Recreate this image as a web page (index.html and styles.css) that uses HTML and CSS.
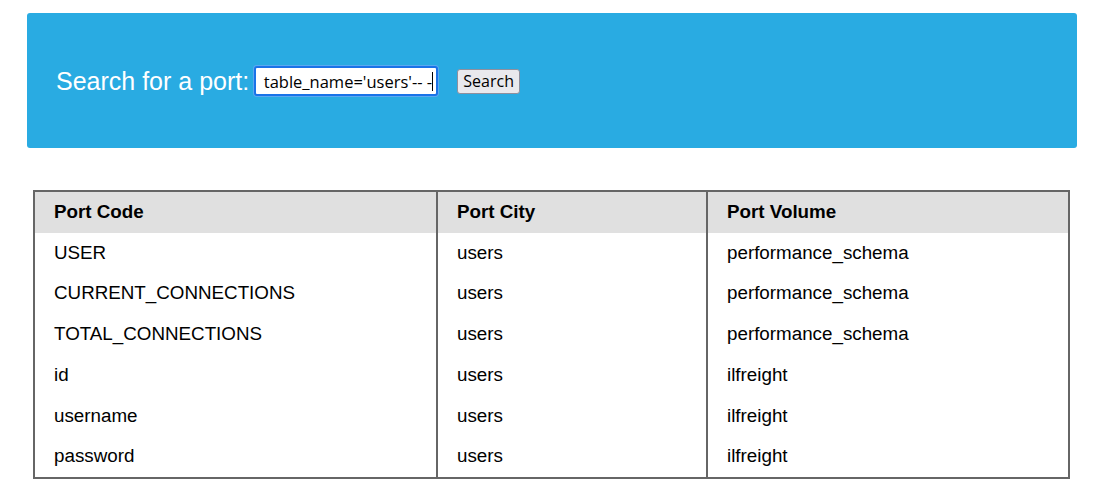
FILE: index.html
```html
<!DOCTYPE html>
<html>
<head>
<meta charset="utf-8">
<link rel="stylesheet" href="styles.css">
</head>
<body>
<div class="page">
  <div class="banner">
    <form class="search">
      <label class="label">Search for a port:</label>
      <div class="field"><span class="field-text">table_name='users'-- -</span><span class="caret"></span></div>
      <button type="button" class="btn">Search</button>
    </form>
  </div>
  <table class="ports">
    <thead>
      <tr><th class="c1">Port Code</th><th class="c2">Port City</th><th class="c3">Port Volume</th></tr>
    </thead>
    <tbody>
      <tr><td>USER</td><td>users</td><td>performance_schema</td></tr>
      <tr><td>CURRENT_CONNECTIONS</td><td>users</td><td>performance_schema</td></tr>
      <tr><td>TOTAL_CONNECTIONS</td><td>users</td><td>performance_schema</td></tr>
      <tr><td>id</td><td>users</td><td>ilfreight</td></tr>
      <tr><td>username</td><td>users</td><td>ilfreight</td></tr>
      <tr><td>password</td><td>users</td><td>ilfreight</td></tr>
    </tbody>
  </table>
</div>
</body>
</html>
```
FILE: styles.css
```css
html, body {
  margin: 0;
  padding: 0;
  background: #ffffff;
}
body {
  font-family: "Liberation Sans", Arial, sans-serif;
}
.page {
  padding: 13px 23px 0 27px;
}
.banner {
  background: #29abe2;
  border-radius: 3px;
  height: 135px;
  box-sizing: border-box;
  padding: 0 29px;
  display: flex;
  align-items: center;
}
.search {
  display: flex;
  align-items: center;
  margin: 0;
  margin-top: 1px;
}
.label {
  color: #ffffff;
  font-size: 25px;
  margin-right: 5px;
}
.field {
  width: 184px;
  height: 30px;
  box-sizing: border-box;
  border: 2px solid #1a73e8;
  box-shadow: 0 0 0 1px #5aa9f0;
  border-radius: 3px;
  background: #ffffff;
  overflow: hidden;
  display: flex;
  justify-content: flex-end;
  align-items: center;
  padding-right: 3px;
  white-space: nowrap;
  font-family: "Open Sans", "Noto Sans", sans-serif;
  font-size: 16.5px;
  color: #000;
}
.field-text {
  flex: none;
}
.caret {
  flex: none;
  width: 1px;
  height: 19px;
  background: #000;
  margin-left: 0;
}
.btn {
  margin-left: 19px;
  width: 63px;
  height: 25px;
  padding: 0;
  background: #e9e9ed;
  border: 1px solid #8f8f9d;
  border-radius: 3px;
  font-family: "Open Sans", "Noto Sans", sans-serif;
  font-size: 16px;
  color: #000;
}
.ports {
  margin: 42px 0 0 6px;
  width: 1037px;
  border-collapse: collapse;
  border: 2px solid #666666;
  font-size: 18.8px;
  line-height: 20.7px;
  color: #000;
}
.ports th, .ports td {
  text-align: left;
  padding: 10px 19px;
  border-left: 2px solid #666666;
}
.ports th {
  background: #e0e0e0;
  font-weight: bold;
}
.c1 { width: 363px; }
.c2 { width: 230px; }
```
